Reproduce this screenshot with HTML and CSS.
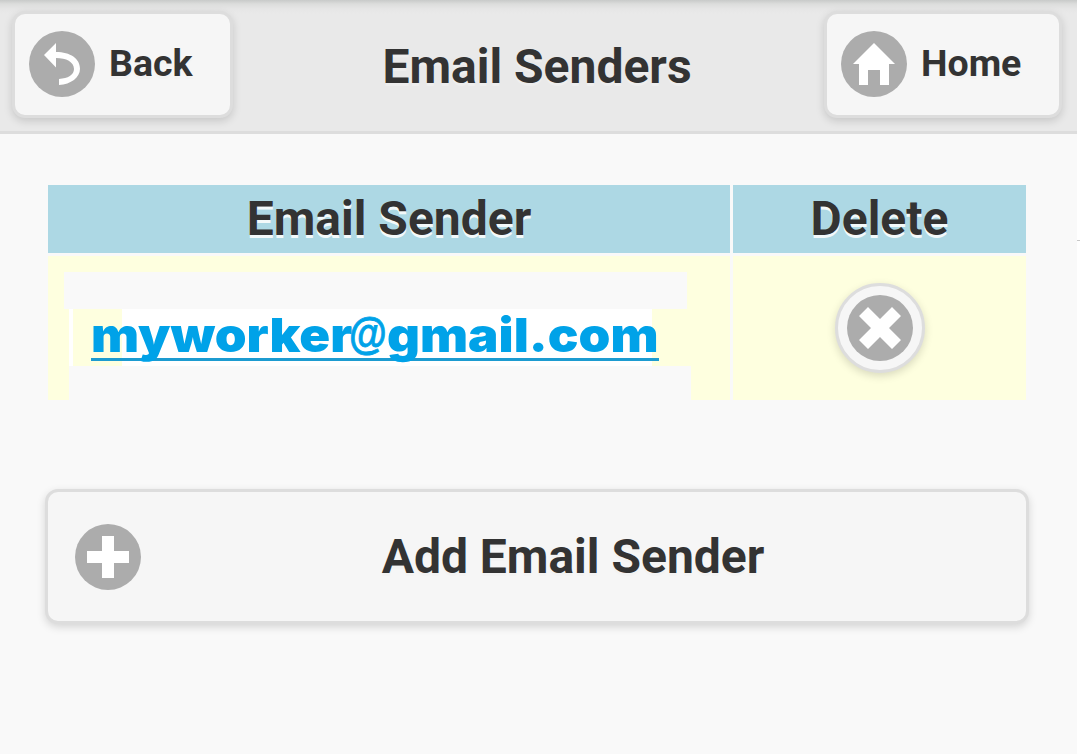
FILE: index.html
```
<!DOCTYPE html>
<html lang="en">
<head>
<meta charset="utf-8">
<title>Email Senders</title>
<link rel="stylesheet" href="styles.css">
</head>
<body>
<div class="page">
  <header class="header">
    <a class="btn back"><span class="icon"><svg viewBox="0 0 14 14"><path d="M5 3V0L1 4l4 4.200V5c3.400 0 6 1.300 6 3.700C11 10.600 9 11.900 6 12v2c4-.2 7-2.500 7-5.400C13 5.200 9.800 3 5 3z"/></svg></span><span class="label">Back</span></a>
    <h1 class="title">Email Senders</h1>
    <a class="btn home"><span class="icon"><svg viewBox="0 0 14 14"><path d="M7 0L0 7h2v7h3V9h4v5h3V7h2z"/></svg></span><span class="label">Home</span></a>
  </header>
  <main class="content">
    <div class="table">
      <div class="th">Email Sender</div>
      <div class="th">Delete</div>
      <div class="td sender">
        <div class="band band-top"></div>
        <div class="mail-row"><a class="mail"><span class="word user">myworker</span><span class="at">@</span><span class="word">gmail.com</span></a></div>
        <div class="band band-bottom"></div>
      </div>
      <div class="td remove">
        <a class="round"><span class="icon"><svg viewBox="0 0 14 14"><path d="M14 3l-3-3-4 4-4-4-3 3 4 4-4 4 3 3 4-4 4 4 3-3-4-4z"/></svg></span></a>
      </div>
    </div>
    <a class="btn add"><span class="icon"><svg viewBox="0 0 14 14"><path d="M5 0h4v5h5v4H9v5H5V9H0V5h5z"/></svg></span><span class="add-label">Add Email Sender</span></a>
  </main>
</div>
<aside class="edge"></aside>
</body>
</html>
```
FILE: styles.css
```
* { box-sizing: border-box; }
body {
  margin: 0;
  display: flex;
  height: 754px;
  overflow: hidden;
  background: #fff;
  color: #333;
  font-family: Roboto, sans-serif;
  font-weight: 700;
}
.page { width: 1077px; background: #f9f9f9; }
.edge { width: 3px; height: 241px; border-bottom: 1px solid #c8c8c8; }
.header {
  display: flex;
  justify-content: space-between;
  height: 134px;
  padding: 11px 15px 0 12px;
  border-bottom: 3px solid #ddd;
  background: linear-gradient(#c8cac9 0, #dcdddc 4px, #e6e6e6 9px, #e9e9e9 14px);
}
.btn {
  display: flex;
  align-items: center;
  border: 3px solid #ddd;
  border-radius: 13px;
  background: #f6f6f6;
  box-shadow: 0 3px 9px rgba(0, 0, 0, .15);
  text-shadow: 0 3px 0 #f3f3f3;
}
.back, .home { height: 107px; padding: 0 0 2px 14px; gap: 14px; }
.back { width: 221px; }
.home { width: 238px; }
.label { margin-top: -2px; font-size: 37.5px; line-height: 48px; }
.icon {
  flex: none;
  display: grid;
  place-items: center;
  width: 66px;
  height: 66px;
  border-radius: 50%;
  background: #acacac;
}
.icon svg { display: block; width: 42px; height: 42px; fill: #fff; }
.title {
  margin: 27px 0 0 17px;
  font-size: 48px;
  line-height: 57px;
  text-shadow: 0 3px 0 #eee;
}
.content { padding: 51px 48px 0 45px; }
.table {
  display: grid;
  grid-template-columns: 682px 293px;
  grid-template-rows: 68px 144px;
  gap: 3px;
  margin-left: 3px;
}
.th {
  background: #add8e4;
  font-size: 48px;
  line-height: 68px;
  text-align: center;
  text-shadow: 0 3px 0 #f3f9fa;
}
.td { background: #feffdf; }
.sender { padding-top: 16px; }
.band { background: #f9f9f9; }
.band-top { width: 623px; height: 37px; margin-left: 16px; }
.band-bottom { width: 622px; height: 34px; margin-left: 21px; }
.mail-row {
  display: flex;
  width: 583px;
  height: 57px;
  margin-left: 21px;
  padding-left: 22px;
  background: linear-gradient(90deg, #fff 4px, #feffdf 4px, #feffdf 53px, #fff 53px);
}
.mail {
  flex: none;
  display: flex;
  width: 568px;
  height: 52px;
  border-bottom: 3px solid #1c9bd0;
  color: #00a2e8;
  font-family: Inter, sans-serif;
  font-size: 47px;
  font-weight: 900;
  line-height: 52px;
  white-space: nowrap;
}
.word { transform: scaleX(1.085); transform-origin: 0 50%; }
.user { flex: none; width: 258px; }
.at {
  flex: none;
  width: 38px;
  font-family: "Liberation Sans", sans-serif;
  font-size: 44px;
  font-weight: 700;
  line-height: 50px;
  transform: scaleX(.88);
  transform-origin: 0 50%;
  -webkit-text-stroke: .8px #00a2e8;
}
.remove { display: flex; justify-content: center; padding: 27px 0 0 1px; }
.round {
  display: grid;
  place-items: center;
  width: 90px;
  height: 90px;
  border: 3px solid #ddd;
  border-radius: 50%;
  background: #f6f6f6;
  box-shadow: 0 3px 9px rgba(0, 0, 0, .15);
}
.add { height: 135px; margin-top: 89px; padding-left: 27px; }
.add-label {
  flex: 1;
  padding-right: 21px;
  font-size: 48px;
  line-height: 60px;
  text-align: center;
}
```
